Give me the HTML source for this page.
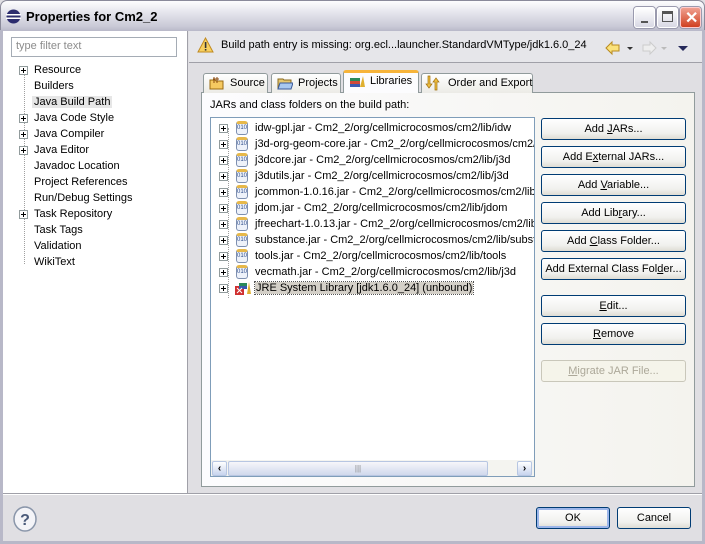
<!DOCTYPE html>
<html><head><style>
*{margin:0;padding:0;box-sizing:border-box}
body{width:705px;height:544px;overflow:hidden;background:#e0dfe3;font-family:"Liberation Sans",sans-serif;font-size:11px;color:#000;position:relative}
.a{position:absolute;white-space:nowrap}
.title{left:0;top:0;width:705px;height:31px;background:linear-gradient(#fdfdfe,#e4e4ec 40%,#c9c9d6 85%,#b8b8c8);border:1px solid #8a8a9a;border-bottom:none;border-radius:7px 7px 0 0}
.title span{position:absolute;left:25px;top:8px;font-weight:bold;font-size:13px;color:#000}
.tbtn{top:6px;width:21px;height:21px;border:1px solid #fff;border-radius:3px;background:linear-gradient(#fff,#d8d8e4);box-shadow:0 0 0 1px #9a9aae}
.btn{position:absolute;white-space:nowrap;height:22px;border:1px solid #003c74;border-radius:3px;background:linear-gradient(#fff,#f1f1ee 70%,#dedcd4);text-align:center;line-height:20px;font-size:11px}
.btn.dis{border-color:#c9c7ba;color:#aca899;background:#f5f4ea}
.tree div{height:16px;line-height:16px;position:relative;padding-left:34px;white-space:nowrap}
.pl{position:absolute;width:9px;height:9px;border:1px solid #919b9c;background:#fff;top:4px}
.pl:before{content:"";position:absolute;left:1px;top:3px;width:5px;height:1px;background:#000}
.pl.p:after{content:"";position:absolute;left:3px;top:1px;width:1px;height:5px;background:#000}
.jar{position:absolute;left:25px;top:1px;width:12px;height:14px;border:1px solid #7d8fb0;border-radius:3px;background:#eef2fa;font-size:6px;line-height:9px;text-align:center;color:#2b4a8a;border-top:3px solid #e7b84a}
.tab{position:absolute;white-space:nowrap;top:73px;height:20px;border:1px solid #919b9c;border-bottom:none;border-radius:3px 3px 0 0;background:linear-gradient(#fff,#ecebe6);line-height:19px;padding-left:26px;font-size:11px}
</style></head><body>
<div class="a title"><span>Properties for Cm2_2</span>
<svg class="a" style="left:5px;top:8px" width="15" height="15"><circle cx="7.5" cy="7.5" r="7" fill="#2c2c6e"/><rect x="0" y="5" width="15" height="1.5" fill="#fff"/><rect x="0" y="8.5" width="15" height="1.5" fill="#fff"/></svg>
<div class="a tbtn" style="left:633px"><div class="a" style="left:6px;top:13px;width:7px;height:2px;background:#555"></div></div>
<div class="a tbtn" style="left:656px"><div class="a" style="left:4px;top:3px;width:11px;height:11px;border:1px solid #555;border-top-width:3px"></div></div>
<div class="a tbtn" style="left:679px;background:linear-gradient(#f0a090,#d04020);border-color:#fcc"><span class="a" style="left:4px;top:0px;color:#fff;font-size:16px;font-weight:bold">✕</span></div>
</div>
<div class="a" style="left:0;top:30px;width:3px;height:514px;background:#b8b8c8"></div>
<div class="a" style="left:702px;top:30px;width:3px;height:514px;background:#b8b8c8"></div>
<div class="a" style="left:0;top:541px;width:705px;height:3px;background:#b8b8c8"></div>

<div class="a" style="left:3px;top:31px;width:185px;height:462px;background:#fff;border-right:1px solid #a0a0a8"></div>
<div class="a" style="left:11px;top:37px;width:166px;height:20px;border:1px solid #a5acb5;background:#fff;color:#8c8c8c;padding:2px 4px;font-size:11px">type filter text</div>
<div class="a" style="left:24px;top:72px;width:1px;height:192px;border-left:1px dotted #a0a0a0"></div>
<div class="a tree" style="left:0;top:62px;width:186px">
<div><span class="pl p" style="left:19px"></span>Resource</div>
<div>Builders</div>
<div><span style="background:#e6e6e6;padding:0 2px;margin-left:-2px">Java Build Path</span></div>
<div><span class="pl p" style="left:19px"></span>Java Code Style</div>
<div><span class="pl p" style="left:19px"></span>Java Compiler</div>
<div><span class="pl p" style="left:19px"></span>Java Editor</div>
<div>Javadoc Location</div>
<div>Project References</div>
<div>Run/Debug Settings</div>
<div><span class="pl p" style="left:19px"></span>Task Repository</div>
<div>Task Tags</div>
<div>Validation</div>
<div>WikiText</div>
</div>

<div class="a" style="left:189px;top:31px;width:513px;height:32px;background:#e6e6ea;border-bottom:1px solid #a0a0a8"></div>
<svg class="a" style="left:197px;top:37px" width="17" height="16"><path d="M8.5 1 L16 15 L1 15 Z" fill="#f8d060" stroke="#c08a20"/><rect x="7.8" y="5" width="1.6" height="6" fill="#333"/><rect x="7.8" y="12" width="1.6" height="1.6" fill="#333"/></svg>
<div class="a" style="left:221px;top:39px">Build path entry is missing: org.ecl...launcher.StandardVMType/jdk1.6.0_24</div>
<svg class="a" style="left:604px;top:40px" width="90" height="16"><path d="M2 8 L8 2 L8 5 L15 5 L15 11 L8 11 L8 14 Z" fill="#fbe27a" stroke="#b88a20"/><path d="M23 7 l3 3 l3 -3z" fill="#333"/><path d="M52 8 L46 2 L46 5 L39 5 L39 11 L46 11 L46 14 Z" fill="#eee" stroke="#ccc"/><path d="M57 7 l3 3 l3 -3z" fill="#bbb"/><path d="M74 6 l5 5 l5 -5z" fill="#25285a"/></svg>

<div class="a" style="left:201px;top:92px;width:494px;height:395px;background:linear-gradient(90deg,#fcfcfe,#f4f3ee);border:1px solid #919b9c"></div>
<div class="tab" style="left:203px;width:65px">Source</div>
<div class="tab" style="left:271px;width:70px">Projects</div>
<div class="tab" style="left:343px;top:70px;height:23px;width:76px;border-top:3px solid #f7b43a;background:#fcfcfe;line-height:17px">Libraries</div>
<div class="tab" style="left:421px;width:112px">Order and Export</div>
<svg class="a" style="left:209px;top:76px" width="16" height="14"><path d="M1 4 h5 l1 1 h7 v8 h-13z" fill="#f5c960" stroke="#9a6a10"/><path d="M5 1 v6 M8 1 v6 M4 3 h6" stroke="#8a4a10"/></svg>
<svg class="a" style="left:277px;top:76px" width="16" height="14"><path d="M1 3 h5 l1 1 h7 v9 h-13z" fill="#e6c870" stroke="#8a6a20"/><path d="M3 7 h13 l-2 6 h-13z" fill="#a8c8f0" stroke="#3a5a9a"/></svg>
<svg class="a" style="left:349px;top:75px" width="16" height="14"><rect x="1" y="3" width="10" height="3" fill="#2a8a5a"/><rect x="1" y="6" width="10" height="3" fill="#d04a3a"/><rect x="1" y="9" width="10" height="3" fill="#3a5ab0"/><path d="M11 12 l3 -11 l2 11z" fill="#e0b030"/></svg>
<svg class="a" style="left:425px;top:75px" width="16" height="16"><path d="M3 1 v8 h-2 l3 4 l3 -4 h-2 v-8z M12 15 v-8 h2 l-3 -4 l-3 4 h2 v8z" fill="#f0c040" stroke="#a07010" stroke-width=".7"/></svg>
<div class="a" style="left:210px;top:99px">JARs and class folders on the build path:</div>

<div class="a" style="left:210px;top:117px;width:325px;height:360px;background:#fff;border:1px solid #7f9db9;overflow:hidden">
<div class="a" style="left:17px;top:10px;width:1px;height:170px;border-left:1px dotted #a0a0a0"></div>
<div class="a tree" style="left:0;top:2px;width:330px">
<div style="padding-left:44px"><span class="pl p" style="left:8px"></span><span class="jar">010</span>idw-gpl.jar - Cm2_2/org/cellmicrocosmos/cm2/lib/idw</div>
<div style="padding-left:44px"><span class="pl p" style="left:8px"></span><span class="jar">010</span>j3d-org-geom-core.jar - Cm2_2/org/cellmicrocosmos/cm2/lib/j3d</div>
<div style="padding-left:44px"><span class="pl p" style="left:8px"></span><span class="jar">010</span>j3dcore.jar - Cm2_2/org/cellmicrocosmos/cm2/lib/j3d</div>
<div style="padding-left:44px"><span class="pl p" style="left:8px"></span><span class="jar">010</span>j3dutils.jar - Cm2_2/org/cellmicrocosmos/cm2/lib/j3d</div>
<div style="padding-left:44px"><span class="pl p" style="left:8px"></span><span class="jar">010</span>jcommon-1.0.16.jar - Cm2_2/org/cellmicrocosmos/cm2/lib/jfree</div>
<div style="padding-left:44px"><span class="pl p" style="left:8px"></span><span class="jar">010</span>jdom.jar - Cm2_2/org/cellmicrocosmos/cm2/lib/jdom</div>
<div style="padding-left:44px"><span class="pl p" style="left:8px"></span><span class="jar">010</span>jfreechart-1.0.13.jar - Cm2_2/org/cellmicrocosmos/cm2/lib/jfree</div>
<div style="padding-left:44px"><span class="pl p" style="left:8px"></span><span class="jar">010</span>substance.jar - Cm2_2/org/cellmicrocosmos/cm2/lib/substance</div>
<div style="padding-left:44px"><span class="pl p" style="left:8px"></span><span class="jar">010</span>tools.jar - Cm2_2/org/cellmicrocosmos/cm2/lib/tools</div>
<div style="padding-left:44px"><span class="pl p" style="left:8px"></span><span class="jar">010</span>vecmath.jar - Cm2_2/org/cellmicrocosmos/cm2/lib/j3d</div>
<div style="padding-left:44px"><span class="pl p" style="left:8px"></span><svg class="a" style="left:24px;top:1px" width="16" height="15"><rect x="0" y="5" width="9" height="9" fill="#d03030"/><rect x="4" y="2" width="8" height="3" fill="#2a8a5a"/><rect x="4" y="5" width="8" height="3" fill="#3a5ab0"/><path d="M12 13 l2 -12 l2 12z" fill="#e0b030"/><path d="M2 7 l5 5 M7 7 l-5 5" stroke="#fff"/></svg><span style="background:#d4d0c8;outline:1px dotted #555;padding:0 1px">JRE System Library [jdk1.6.0_24] (unbound)</span></div>
</div>
<div class="a" style="left:0;top:342px;width:323px;height:17px;background:#f4f4f0">
<div class="a" style="left:1px;top:1px;width:15px;height:15px;border:1px solid #b7c6e2;border-radius:2px;background:linear-gradient(#fff,#c8d4ee);font-size:10px;line-height:13px;text-align:center;font-weight:bold">‹</div>
<div class="a" style="left:17px;top:1px;width:260px;height:15px;border:1px solid #b7c6e2;border-radius:2px;background:linear-gradient(#f6f6fa,#d0d8ec);text-align:center;font-size:8px;line-height:13px;color:#888">|||</div>
<div class="a" style="left:306px;top:1px;width:15px;height:15px;border:1px solid #b7c6e2;border-radius:2px;background:linear-gradient(#fff,#c8d4ee);font-size:10px;line-height:13px;text-align:center;font-weight:bold">›</div>
</div>
</div>

<div class="btn" style="left:541px;top:118px;width:145px">Add <u>J</u>ARs...</div>
<div class="btn" style="left:541px;top:146px;width:145px">Add E<u>x</u>ternal JARs...</div>
<div class="btn" style="left:541px;top:174px;width:145px">Add <u>V</u>ariable...</div>
<div class="btn" style="left:541px;top:202px;width:145px">Add Lib<u>r</u>ary...</div>
<div class="btn" style="left:541px;top:230px;width:145px">Add <u>C</u>lass Folder...</div>
<div class="btn" style="left:541px;top:258px;width:145px">Add External Class Fol<u>d</u>er...</div>
<div class="btn" style="left:541px;top:295px;width:145px"><u>E</u>dit...</div>
<div class="btn" style="left:541px;top:323px;width:145px"><u>R</u>emove</div>
<div class="btn dis" style="left:541px;top:360px;width:145px"><u>M</u>igrate JAR File...</div>

<div class="a" style="left:3px;top:493px;width:699px;height:1px;background:#a0a0a8"></div>
<div class="a" style="left:3px;top:494px;width:699px;height:1px;background:#fff"></div>
<svg class="a" style="left:12px;top:505px" width="26" height="28"><ellipse cx="13" cy="14" rx="11" ry="12" fill="#f4f4f8" stroke="#8a96aa" stroke-width="1.5"/><text x="13" y="20" font-size="16" font-weight="bold" text-anchor="middle" fill="#4a5a7a" font-family="Liberation Sans">?</text></svg>
<div class="btn" style="left:536px;top:507px;width:74px;box-shadow:inset 0 0 0 2px #9cb6ea">OK</div>
<div class="btn" style="left:617px;top:507px;width:74px">Cancel</div>
</body></html>
